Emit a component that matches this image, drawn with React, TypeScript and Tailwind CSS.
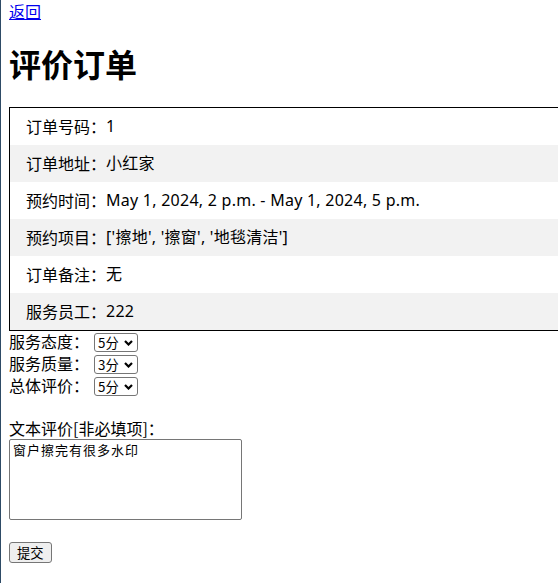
import { useState } from "react";

const rows: [string, string][] = [
  ["订单号码", "1"],
  ["订单地址", "小红家"],
  ["预约时间", "May 1, 2024, 2 p.m. - May 1, 2024, 5 p.m."],
  ["预约项目", "['擦地', '擦窗', '地毯清洁']"],
  ["订单备注", "无"],
  ["服务员工", "222"],
];

const scores = ["1分", "2分", "3分", "4分", "5分"];

function ScoreSelect({ value, onChange }: { value: string; onChange: (v: string) => void }) {
  return (
    <span className="relative inline-block">
      <select
        value={value}
        onChange={(e) => onChange(e.target.value)}
        className="block appearance-none w-[44px] h-[19px] pl-[3px] text-[13.33px] leading-[17px] bg-white text-black border border-[#767676] rounded-[3px]"
      >
        {scores.map((s) => (
          <option key={s} value={s}>
            {s}
          </option>
        ))}
      </select>
      <svg
        className="absolute right-[5px] top-[7px] pointer-events-none"
        width="9"
        height="6"
        viewBox="0 0 9 6"
      >
        <path d="M1 1 L4.5 4.5 L8 1" fill="none" stroke="#000" strokeWidth="2.2" />
      </svg>
    </span>
  );
}

export default function App() {
  const [attitude, setAttitude] = useState("5分");
  const [quality, setQuality] = useState("3分");
  const [overall, setOverall] = useState("5分");
  const [comment, setComment] = useState("窗户擦完有很多水印");

  const fields: [string, string, (v: string) => void][] = [
    ["服务态度", attitude, setAttitude],
    ["服务质量", quality, setQuality],
    ["总体评价", overall, setOverall],
  ];

  return (
    <div
      className="min-h-screen overflow-hidden border-l border-[#2e4b66] pl-2 text-black bg-white text-[16px]"
      style={{ fontFamily: '"Noto Sans CJK SC", "Noto Sans", sans-serif' }}
    >
      <div className="leading-[23px]">
        <a href="#" className="text-[#0000ee] underline">
          返回
        </a>
      </div>

      <h1 className="mt-[19px] mb-[22px] text-[32px] leading-[43px] font-bold">评价订单</h1>

      {/* Order info */}
      <div className="w-[620px] border border-black">
        {rows.map(([label, value], i) => (
          <div
            key={label}
            className={`h-[37px] flex items-center pl-4 pb-px ${i % 2 === 1 ? "bg-[#f2f2f2]" : ""}`}
          >
            <span>{label}：</span>
            <span
              className="tracking-[0.25px]"
              style={{ fontFamily: '"Noto Sans", "Noto Sans CJK SC", sans-serif' }}
            >
              {value}
            </span>
          </div>
        ))}
      </div>

      {/* Ratings */}
      <form onSubmit={(e) => e.preventDefault()}>
        <div>
          {fields.map(([label, value, set]) => (
            <div key={label} className="h-[22px] flex items-center leading-[21px]">
              <span className="w-[85px] -mt-px">{label}：</span>
              <ScoreSelect value={value} onChange={set} />
            </div>
          ))}
        </div>

        <div className="h-[21px]" />
        <div className="leading-[21px]">文本评价[非必填项]：</div>
        <textarea
          value={comment}
          onChange={(e) => setComment(e.target.value)}
          className="block w-[233px] h-[81px] border border-[#767676] rounded-[2px] px-[3px] py-[1px] text-[13px] leading-[17px] tracking-[1px] resize-none"
        />

        <div className="h-[22px]" />
        <button
          type="submit"
          className="block h-[21px] px-[7px] text-[13.33px] leading-[19px] bg-[#efefef] border border-[#767676] rounded-[3px]"
        >
          提交
        </button>
      </form>
    </div>
  );
}
